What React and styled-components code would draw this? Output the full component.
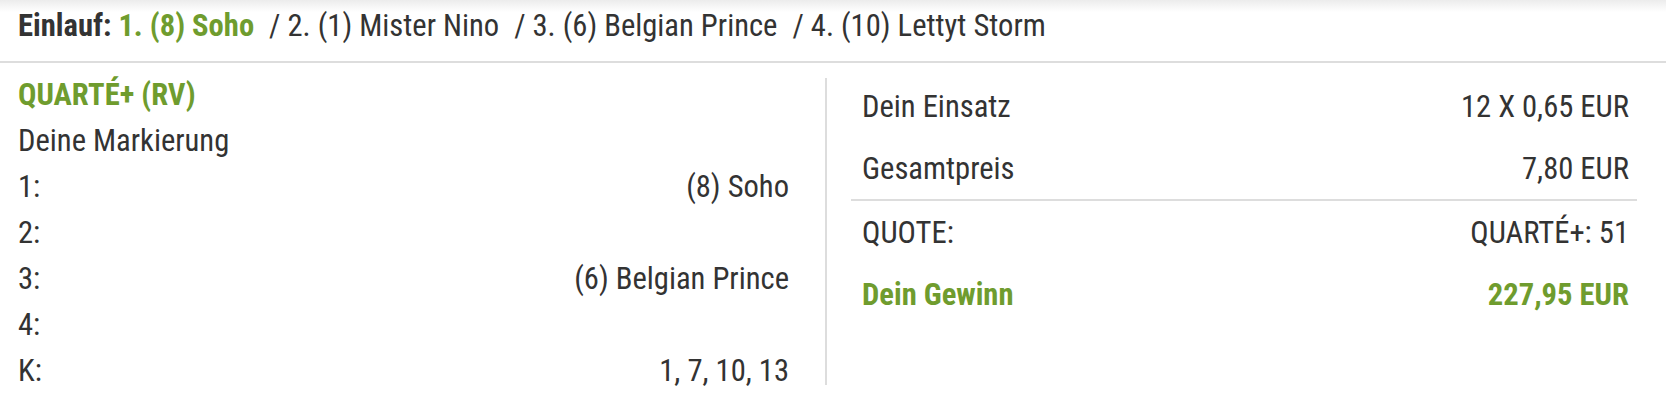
import React from "react";
import styled, { createGlobalStyle } from "styled-components";

const GlobalStyle = createGlobalStyle`
  body {
    margin: 0;
    background: #fff;
    font-family: "Roboto Condensed", Roboto, "Liberation Sans", sans-serif;
    color: #333;
  }
`;

const green = "#6f9c2e";

const StyledResult = styled.div`
  width: 1666px;
  min-height: 412px;
  background: linear-gradient(#ececec, #fff 12px);
`;

const Einlauf = styled.div`
  padding: 9px 18px 18px;
  font-size: 30.6px;
  line-height: 34px;
  border-bottom: 2px solid #ddd;
  white-space: pre;
`;

const Label = styled.span`
  font-weight: 700;
  color: ${(p) => (p.$green ? green : "#333")};
`;

const Place = styled.span`
  margin-left: 15px;
`;

const Body = styled.div`
  display: flex;
  align-items: flex-start;
  padding-top: 12px;
`;

const Marking = styled.div`
  width: 771px;
  margin-top: 3px;
  padding: 3px 36px 0 18px;
  border-right: 2px solid #ddd;
  display: flex;
  flex-direction: column;
  gap: 18px;
  font-size: 30.6px;
  line-height: 28px;
`;

const BetName = styled.div`
  color: ${green};
  font-weight: 700;
`;

const Line = styled.div`
  display: flex;
  justify-content: space-between;
`;

const Summary = styled.div`
  flex: 1;
  margin: 0 29px 0 24px;
`;

const Block = styled.div`
  border-bottom: ${(p) => (p.$divided ? "2px solid #ddd" : "none")};
`;

const Row = styled.div`
  height: 62px;
  padding: 0 8px 0 11px;
  display: flex;
  align-items: center;
  justify-content: space-between;
  font-size: 30.6px;
  color: ${(p) => (p.$win ? green : "#333")};
  font-weight: ${(p) => (p.$win ? 700 : 400)};
`;

const einlauf = ["2. (1) Mister Nino", "3. (6) Belgian Prince", "4. (10) Lettyt Storm"];

const marks = [
  ["1:", "(8) Soho"],
  ["2:", ""],
  ["3:", "(6) Belgian Prince"],
  ["4:", ""],
  ["K:", "1, 7, 10, 13"],
];

const App = () => {
  return (
    <StyledResult>
      <GlobalStyle />
      <Einlauf>
        <Label>Einlauf: </Label>
        <Label $green>1. (8) Soho</Label>
        {einlauf.map((e) => (
          <Place key={e}>/ {e}</Place>
        ))}
      </Einlauf>
      <Body>
        <Marking>
          <BetName>QUARTÉ+ (RV)</BetName>
          <div>Deine Markierung</div>
          {marks.map(([k, v]) => (
            <Line key={k}>
              <span>{k}</span>
              <span>{v}</span>
            </Line>
          ))}
        </Marking>
        <Summary>
          <Block $divided>
            <Row>
              <span>Dein Einsatz</span>
              <span>12 X 0,65 EUR</span>
            </Row>
            <Row>
              <span>Gesamtpreis</span>
              <span>7,80 EUR</span>
            </Row>
          </Block>
          <Block>
            <Row>
              <span>QUOTE:</span>
              <span>QUARTÉ+: 51</span>
            </Row>
            <Row $win>
              <span>Dein Gewinn</span>
              <span>227,95 EUR</span>
            </Row>
          </Block>
        </Summary>
      </Body>
    </StyledResult>
  );
};

export default App;
